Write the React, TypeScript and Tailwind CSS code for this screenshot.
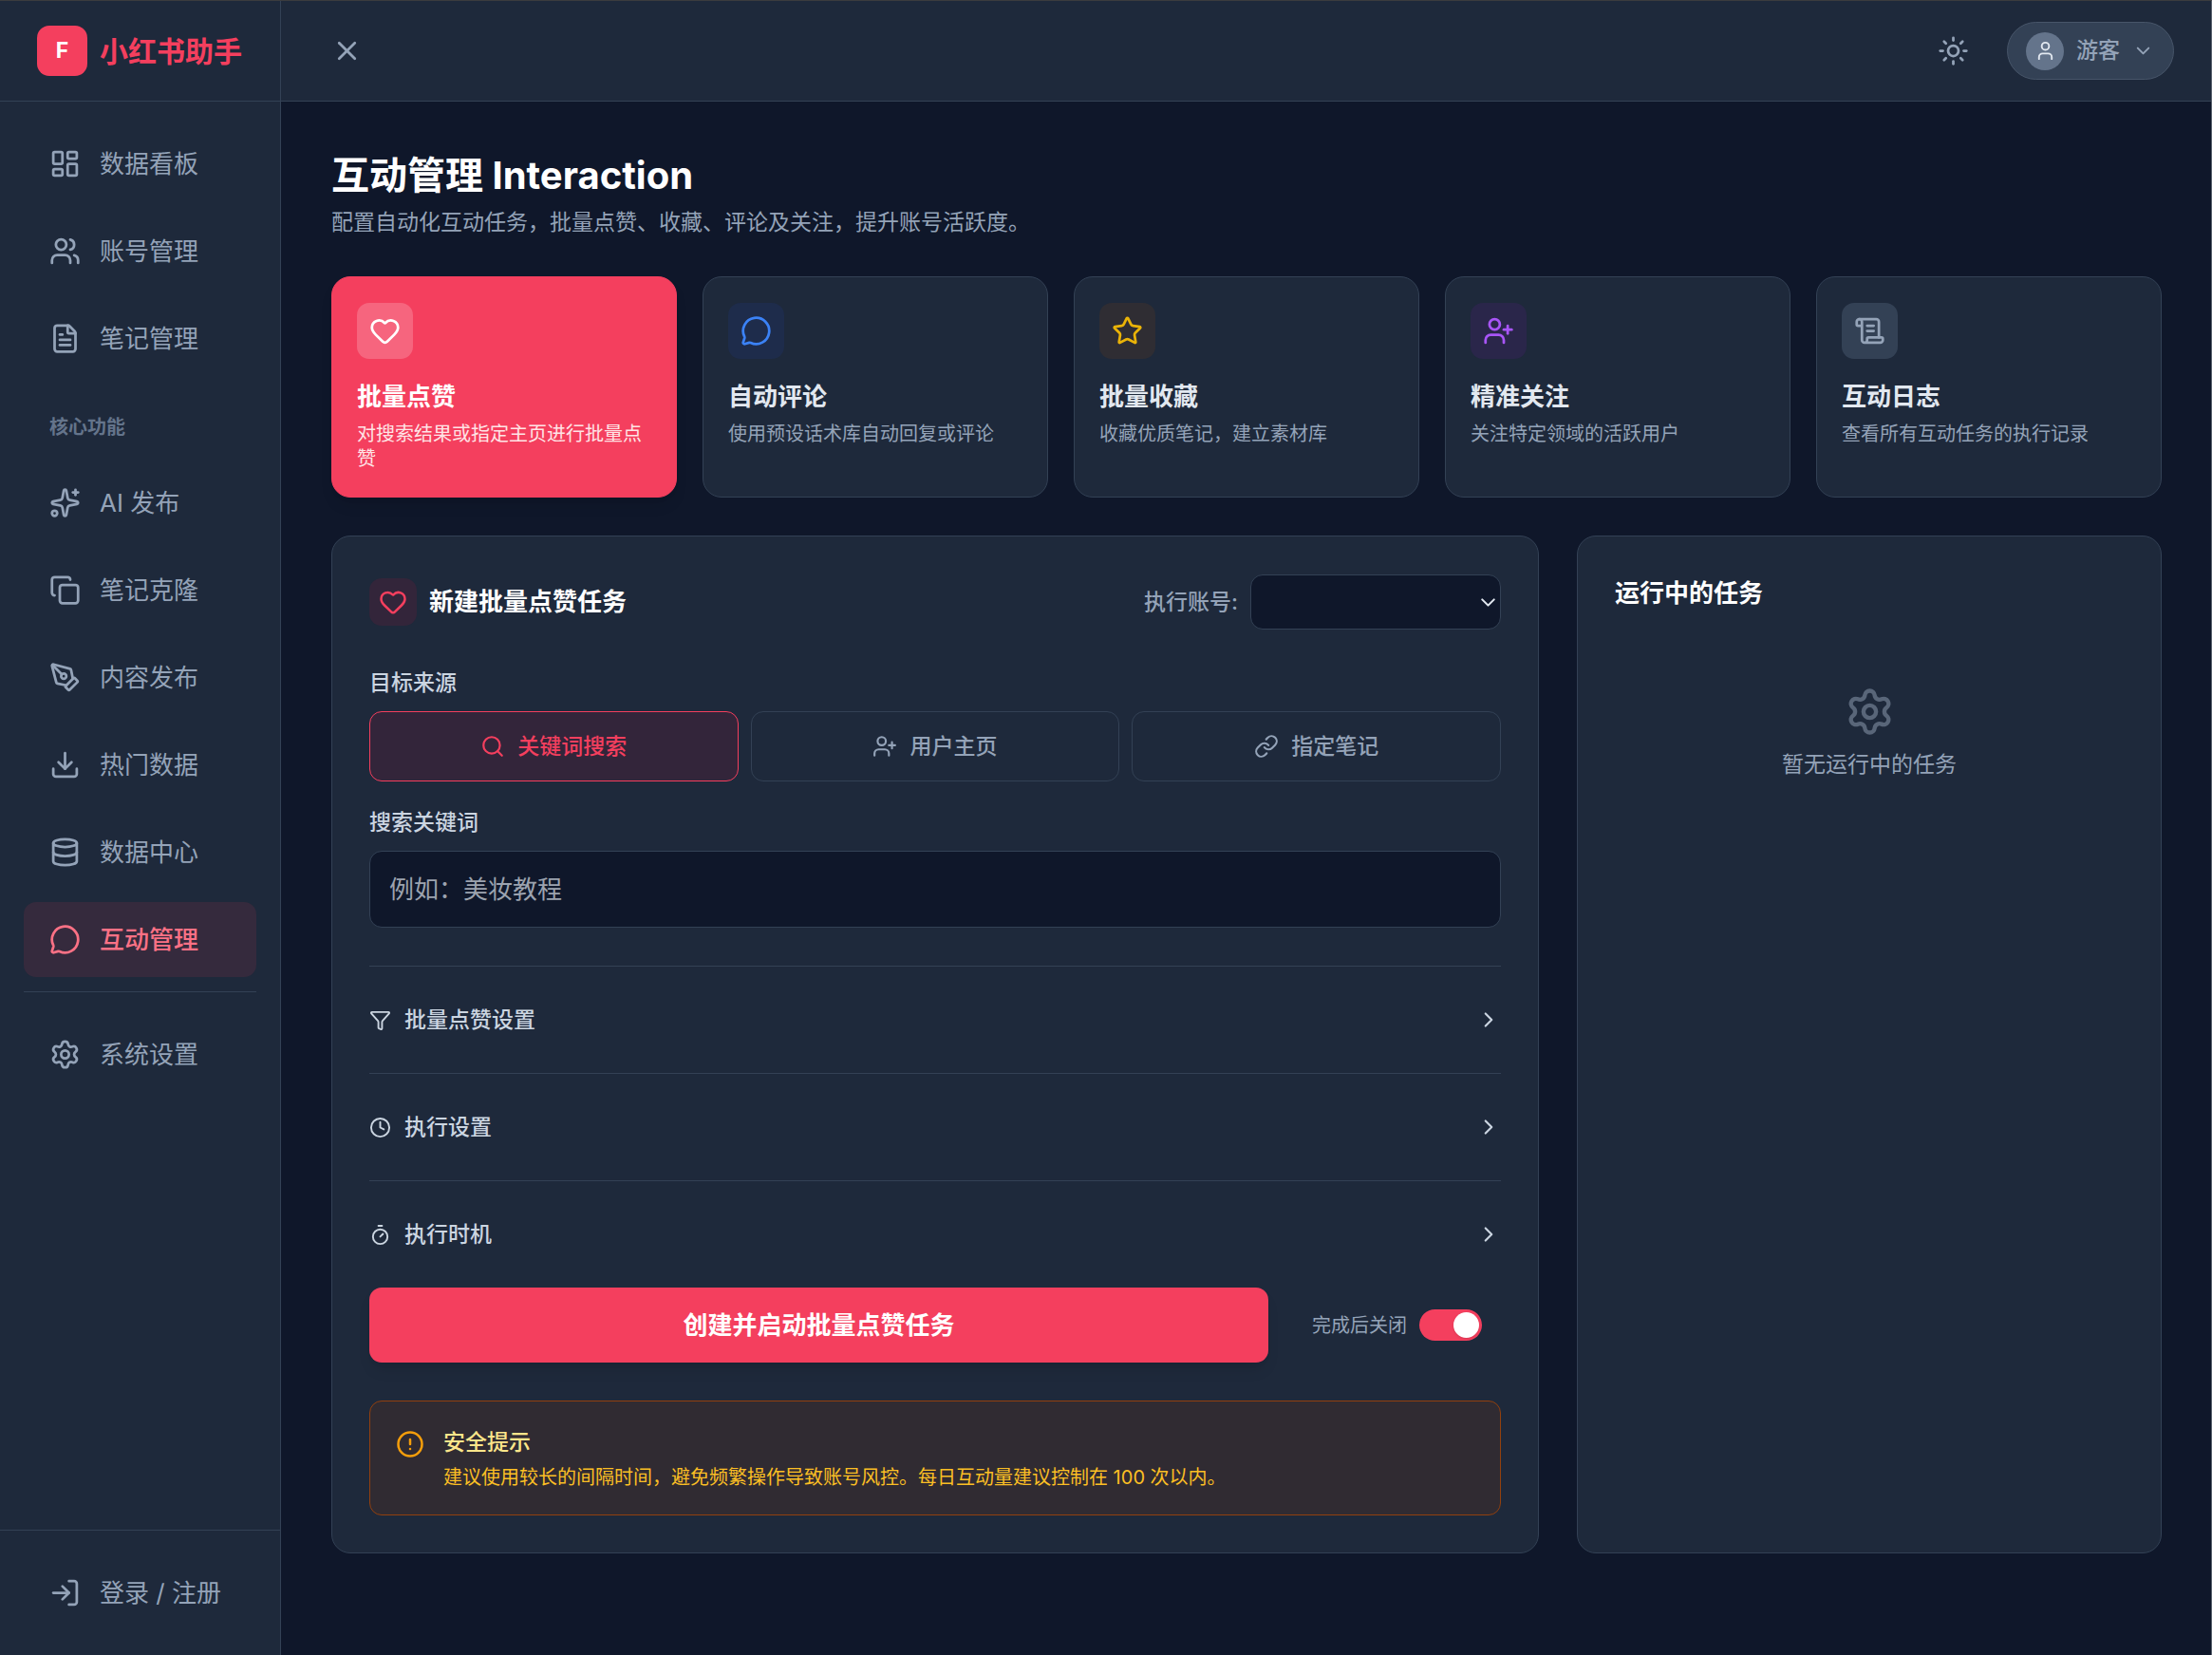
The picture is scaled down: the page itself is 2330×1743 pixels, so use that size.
import { useState, type ReactNode } from 'react';
import {
  ChevronDown,
  ChevronRight,
  CircleAlert,
  Clock,
  Copy,
  Database,
  Download,
  FileText,
  Funnel,
  Heart,
  LayoutDashboard,
  Link,
  LogIn,
  MessageCircle,
  PenTool,
  ScrollText,
  Search,
  Settings,
  Sparkles,
  Star,
  Sun,
  Timer,
  User,
  UserPlus,
  Users,
  X,
  type LucideIcon,
} from 'lucide-react';

type NavEntry = { label: string; icon: LucideIcon; active?: boolean };

const overviewNav: NavEntry[] = [
  { label: '数据看板', icon: LayoutDashboard },
  { label: '账号管理', icon: Users },
  { label: '笔记管理', icon: FileText },
];

const coreNav: NavEntry[] = [
  { label: 'AI 发布', icon: Sparkles },
  { label: '笔记克隆', icon: Copy },
  { label: '内容发布', icon: PenTool },
  { label: '热门数据', icon: Download },
  { label: '数据中心', icon: Database },
  { label: '互动管理', icon: MessageCircle, active: true },
];

const actions = [
  { title: '批量点赞', text: '对搜索结果或指定主页进行批量点赞', icon: Heart, tone: 'bg-white/20 text-white' },
  { title: '自动评论', text: '使用预设话术库自动回复或评论', icon: MessageCircle, tone: 'bg-[#1e2c4b] text-[#3b82f6]' },
  { title: '批量收藏', text: '收藏优质笔记，建立素材库', icon: Star, tone: 'bg-[#2f2d33] text-[#eab308]' },
  { title: '精准关注', text: '关注特定领域的活跃用户', icon: UserPlus, tone: 'bg-[#2a264a] text-[#a855f7]' },
  { title: '互动日志', text: '查看所有互动任务的执行记录', icon: ScrollText, tone: 'bg-[#334155] text-[#94a3b8]' },
];

const sources = [
  { label: '关键词搜索', icon: Search },
  { label: '用户主页', icon: UserPlus },
  { label: '指定笔记', icon: Link },
];

const sections = [
  { label: '批量点赞设置', icon: Funnel },
  { label: '执行设置', icon: Clock },
  { label: '执行时机', icon: Timer },
];

function NavItem({ label, icon: Icon, active }: NavEntry) {
  return (
    <a
      href="#"
      aria-current={active ? 'page' : undefined}
      className={`flex h-[79px] items-center gap-5 rounded-[13px] px-[27px] text-[26px] leading-10 ${
        active ? 'bg-[#352a3d] font-medium text-[#fb7185]' : 'text-[#94a3b8]'
      }`}
    >
      <Icon size={33} />
      {label}
    </a>
  );
}

function Panel({ className, children }: { className?: string; children: ReactNode }) {
  return (
    <section
      className={`rounded-[20px] border border-[#334155] bg-[#1e293b] px-[39px] pt-10 pb-[39px] ${className ?? ''}`}
    >
      {children}
    </section>
  );
}

export default function App() {
  const [action, setAction] = useState(0);
  const [source, setSource] = useState(0);
  const [closeWhenDone, setCloseWhenDone] = useState(true);

  return (
    <div className="flex min-h-screen border-t border-r border-t-[#3b3c3e] border-r-[#5b6470] bg-[#0f172a] font-['Inter','Noto_Sans_CJK_SC',sans-serif] text-[#94a3b8]">
      <aside className="flex w-[296px] shrink-0 flex-col border-r border-[#334155] bg-[#1e293b]">
        <div className="flex h-[106px] items-center gap-[13px] border-b border-[#334155] px-[39px]">
          <div className="flex size-[53px] shrink-0 items-center justify-center rounded-[13px] bg-[#f43f5e] text-[23px] font-bold text-white">
            F
          </div>
          <span className="text-[30px] leading-10 font-bold whitespace-nowrap text-[#f43f5e]">小红书助手</span>
        </div>
        <nav className="flex flex-1 flex-col gap-[13px] px-[25px] pt-[26px]">
          {overviewNav.map((item) => (
            <NavItem key={item.label} {...item} />
          ))}
          <div className="mt-7 mb-[14px] px-[27px] text-[20px] leading-[26px] font-semibold text-[#64748b]">
            核心功能
          </div>
          {coreNav.map((item) => (
            <NavItem key={item.label} {...item} />
          ))}
          <hr className="mt-[2px] mb-[13px] border-[#334155]" />
          <NavItem label="系统设置" icon={Settings} />
        </nav>
        <div className="border-t border-[#334155] px-[25px] py-[26px]">
          <NavItem label="登录 / 注册" icon={LogIn} />
        </div>
      </aside>

      <div className="flex min-w-0 flex-1 flex-col">
        <header className="flex h-[106px] items-center justify-between border-b border-[#334155] bg-[#1e293b] pr-[39px] pl-[53px]">
          <button type="button" aria-label="收起菜单">
            <X size={33} />
          </button>
          <div className="flex items-center gap-10">
            <button type="button" aria-label="切换主题">
              <Sun size={33} />
            </button>
            <button
              type="button"
              className="flex h-[61px] items-center gap-[13px] rounded-full border border-[#475569] bg-[#334155] pr-5 pl-[19px] text-[23px] font-medium"
            >
              <span className="flex size-10 items-center justify-center rounded-full bg-[#64748b] text-[#e2e8f0]">
                <User size={23} />
              </span>
              游客
              <ChevronDown size={23} />
            </button>
          </div>
        </header>

        <main className="flex-1 py-[53px] pr-[52px] pl-[53px]">
          <h1 className="text-[40px] leading-[50px] font-bold text-white">互动管理 Interaction</h1>
          <p className="mt-2 text-[23px] leading-[33px]">
            配置自动化互动任务，批量点赞、收藏、评论及关注，提升账号活跃度。
          </p>

          <div className="mt-10 grid grid-cols-5 gap-[27px]">
            {actions.map(({ title, text, icon: Icon, tone }, i) => (
              <button
                key={title}
                type="button"
                aria-pressed={i === action}
                onClick={() => setAction(i)}
                className={`flex flex-col items-start rounded-[20px] border px-[26px] py-[27px] text-left ${
                  i === action
                    ? 'border-[#f43f5e] bg-[#f43f5e] text-[#ffe4e6] shadow-lg'
                    : 'border-[#334155] bg-[#1e293b]'
                }`}
              >
                <span className={`rounded-[13px] p-[13px] ${tone}`}>
                  <Icon size={33} />
                </span>
                <span
                  className={`mt-5 text-[26px] leading-10 font-bold ${
                    i === action ? 'text-white' : 'text-[#e2e8f0]'
                  }`}
                >
                  {title}
                </span>
                <span className="mt-[6px] text-[20px] leading-[26px]">{text}</span>
              </button>
            ))}
          </div>

          <div className="mt-10 grid grid-cols-3 gap-10">
            <Panel className="col-span-2">
              <div className="flex items-center justify-between">
                <div className="flex items-center gap-[13px]">
                  <span className="rounded-[13px] bg-[#33253a] p-[10px] text-[#f43f5e]">
                    <Heart size={30} />
                  </span>
                  <h2 className="text-[26px] leading-10 font-bold text-white">新建批量点赞任务</h2>
                </div>
                <div className="flex items-center gap-[13px]">
                  <label htmlFor="account" className="text-[23px] leading-[33px] font-medium">
                    执行账号:
                  </label>
                  <div className="relative">
                    <select
                      id="account"
                      className="block h-[58px] w-[264px] appearance-none rounded-[13px] border border-[#334155] bg-[#0f172a] px-5 text-[23px] text-white"
                    />
                    <ChevronDown
                      size={25}
                      className="pointer-events-none absolute top-[17px] right-[1px] text-[#e2e8f0]"
                    />
                  </div>
                </div>
              </div>

              <fieldset className="mt-10">
                <legend className="text-[23px] leading-[33px] font-medium text-[#cbd5e1]">目标来源</legend>
                <div className="mt-[13px] grid grid-cols-3 gap-[13px]">
                  {sources.map(({ label, icon: Icon }, i) => (
                    <button
                      key={label}
                      type="button"
                      aria-pressed={i === source}
                      onClick={() => setSource(i)}
                      className={`flex h-[74px] items-center justify-center gap-[13px] rounded-[13px] border text-[23px] leading-[33px] font-medium ${
                        i === source ? 'border-[#f43f5e] bg-[#33253a] text-[#f43f5e]' : 'border-[#334155]'
                      }`}
                    >
                      <Icon size={26} />
                      {label}
                    </button>
                  ))}
                </div>
              </fieldset>

              <div className="mt-[27px]">
                <label htmlFor="keyword" className="block text-[23px] leading-[33px] font-medium text-[#cbd5e1]">
                  搜索关键词
                </label>
                <input
                  id="keyword"
                  type="text"
                  placeholder="例如：美妆教程"
                  className="mt-[13px] block h-[81px] w-full rounded-[13px] border border-[#334155] bg-[#0f172a] px-5 text-[26px] text-white placeholder:text-[#9ca3af]"
                />
              </div>

              <div className="mt-10">
                {sections.map(({ label, icon: Icon }) => (
                  <button
                    key={label}
                    type="button"
                    aria-expanded="false"
                    className="flex h-[113px] w-full items-center justify-between border-t border-[#334155] text-[23px] leading-[33px] font-medium text-[#cbd5e1]"
                  >
                    <span className="flex items-center gap-[14px]">
                      <Icon size={23} />
                      {label}
                    </span>
                    <ChevronRight size={26} />
                  </button>
                ))}
              </div>

              <div className="flex items-center gap-[26px]">
                <button
                  type="button"
                  className="h-[79px] flex-1 rounded-[13px] bg-[#f43f5e] text-[26px] leading-10 font-bold text-white shadow-lg"
                >
                  创建并启动批量点赞任务
                </button>
                <label className="flex items-center gap-[13px] px-5 text-[20px] leading-[26px]">
                  完成后关闭
                  <input
                    type="checkbox"
                    role="switch"
                    checked={closeWhenDone}
                    onChange={(e) => setCloseWhenDone(e.target.checked)}
                    className="flex h-[33px] w-[66px] appearance-none items-center rounded-full bg-[#475569] px-[3px] before:size-[27px] before:rounded-full before:bg-white before:shadow checked:justify-end checked:bg-[#f43f5e]"
                  />
                </label>
              </div>

              <div className="mt-10 flex gap-5 rounded-[13px] border border-[#92400e] bg-[#302b32] px-[27px] pt-[27px] pb-[26px]">
                <CircleAlert size={30} className="mt-[3px] shrink-0 text-[#f59e0b]" />
                <div>
                  <h3 className="text-[23px] leading-[33px] font-medium text-[#fde68a]">安全提示</h3>
                  <p className="mt-[7px] text-[20px] leading-[26px] text-[#fbbf24]">
                    建议使用较长的间隔时间，避免频繁操作导致账号风控。每日互动量建议控制在 100 次以内。
                  </p>
                </div>
              </div>
            </Panel>

            <Panel>
              <h2 className="text-[26px] leading-10 font-bold text-white">运行中的任务</h2>
              <div className="mt-[78px] flex flex-col items-center gap-[13px]">
                <Settings size={53} className="opacity-50" />
                <p className="text-[23px] leading-[33px]">暂无运行中的任务</p>
              </div>
            </Panel>
          </div>
        </main>
      </div>
    </div>
  );
}
